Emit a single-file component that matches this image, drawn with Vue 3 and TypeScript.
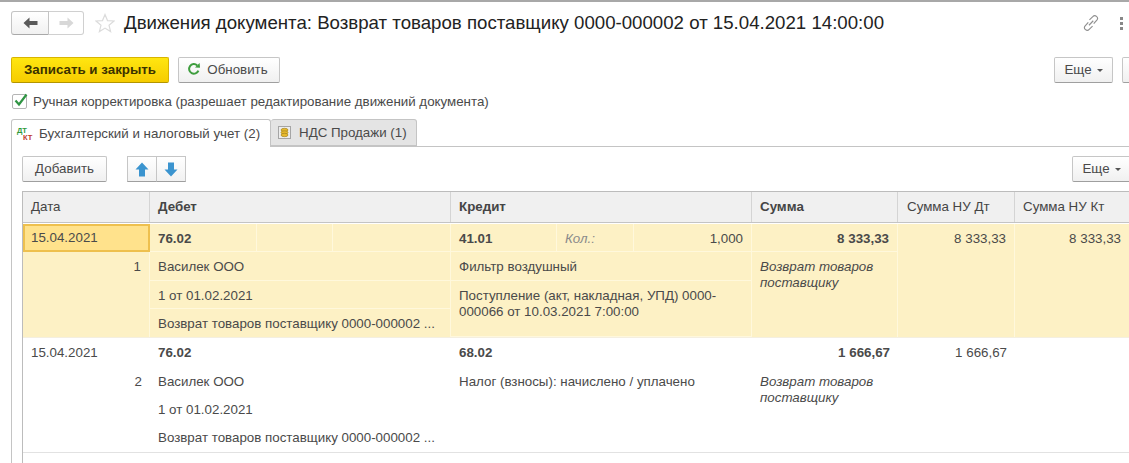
<script setup lang="ts">
interface Cell { text: string; cls: string }
const rows: { active: boolean; cells: Cell[] }[] = [
  {
    active: true,
    cells: [
      { text: '15.04.2021', cls: 'date focus r1' },
      { text: '76.02', cls: 'd1 b r1' },
      { text: '', cls: 'd2 r1' },
      { text: '', cls: 'd3 r1' },
      { text: '41.01', cls: 'c1 b r1' },
      { text: 'Кол.:', cls: 'c2 i muted r1' },
      { text: '1,000', cls: 'c3 num r1' },
      { text: '8 333,33', cls: 'sum b num r1' },
      { text: '8 333,33', cls: 'nd num span4' },
      { text: '8 333,33', cls: 'nk num span4' },
      { text: '1', cls: 'date num rest' },
      { text: 'Василек ООО', cls: 'dw r2' },
      { text: 'Фильтр воздушный', cls: 'cw r2' },
      { text: 'Возврат товаров поставщику', cls: 'sum i wrap rest' },
      { text: '1 от 01.02.2021', cls: 'dw r3' },
      { text: 'Поступление (акт, накладная, УПД) 0000-000066 от 10.03.2021 7:00:00', cls: 'cw wrap r34' },
      { text: 'Возврат товаров поставщику 0000-000002 ...', cls: 'dw r4 nol' },
    ],
  },
  {
    active: false,
    cells: [
      { text: '15.04.2021', cls: 'date r1' },
      { text: '76.02', cls: 'd1 b r1' },
      { text: '', cls: 'd2 r1' },
      { text: '', cls: 'd3 r1' },
      { text: '68.02', cls: 'cw b r1' },
      { text: '1 666,67', cls: 'sum b num r1' },
      { text: '1 666,67', cls: 'nd num span4' },
      { text: '', cls: 'nk num span4' },
      { text: '2', cls: 'date num rest' },
      { text: 'Василек ООО', cls: 'dw r2' },
      { text: 'Налог (взносы): начислено / уплачено', cls: 'cw r2' },
      { text: 'Возврат товаров поставщику', cls: 'sum i wrap rest' },
      { text: '1 от 01.02.2021', cls: 'dw r3' },
      { text: '', cls: 'cw r34' },
      { text: 'Возврат товаров поставщику 0000-000002 ...', cls: 'dw r4 nol' },
    ],
  },
]
</script>

<template>
  <div class="page">
    <div class="titlebar">
      <div class="nav">
        <button class="nav-btn back" aria-label="Назад">
          <svg width="15" height="12" viewBox="0 0 15 12"><path d="M0.5 6 L6.5 0.5 V4 H14.5 V8 H6.5 V11.5 Z" fill="#5a5a5a" /></svg>
        </button>
        <button class="nav-btn fwd" aria-label="Вперед">
          <svg width="15" height="12" viewBox="0 0 15 12"><path d="M14.5 6 L8.5 0.5 V4 H0.5 V8 H8.5 V11.5 Z" fill="#d8d8d8" /></svg>
        </button>
      </div>
      <svg class="star" width="20" height="20" viewBox="0 0 20 20"><path d="M10 1.5 L12.5 7.6 L19 8 L14 12.2 L15.6 18.6 L10 15.1 L4.4 18.6 L6 12.2 L1 8 L7.5 7.6 Z" fill="none" stroke="#dcdcdc" stroke-width="1.2" /></svg>
      <h1 class="title">Движения документа: Возврат товаров поставщику 0000-000002 от 15.04.2021 14:00:00</h1>
      <svg class="link" width="18" height="18" viewBox="0 0 16 16" fill="none" stroke="#8f8f8f" stroke-width="1"><path d="M6.6 5.2 L9.6 2.4 a2.3 2.3 0 0 1 3.6 3 L10.4 8.6" /><path d="M9.4 10.8 L6.4 13.6 a2.3 2.3 0 0 1 -3.6 -3 L5.6 7.4" /><path d="M6.2 10 L10 6" /></svg>
      <div class="dots"><i></i><i></i><i></i></div>
    </div>

    <div class="toolbar">
      <button class="btn primary">Записать и закрыть</button>
      <button class="btn refresh">
        <svg width="14" height="14" viewBox="0 0 14 14" fill="none"><path d="M11.4 8.6 A4.8 4.8 0 1 1 10.2 3.4" stroke="#3f9e3f" stroke-width="2" /><path d="M8 5.6 L13 5.8 L12.6 1 Z" fill="#3f9e3f" /></svg>
        Обновить
      </button>
      <button class="btn more push">Еще<span class="caret"></span></button>
      <button class="btn stub"></button>
    </div>

    <label class="check">
      <span class="box">
        <svg width="16" height="16" viewBox="0 0 16 16"><path d="M3.5 7.5 L7 11.5 L14.5 1.5" fill="none" stroke="#2f9443" stroke-width="2.2" /></svg>
      </span>
      Ручная корректировка (разрешает редактирование движений документа)
    </label>

    <div class="tabs">
      <div class="tab on">
        <span class="dtkt"><span class="dt">ДТ</span><span class="kt">КТ</span></span>
        Бухгалтерский и налоговый учет (2)
      </div>
      <div class="tab off">
        <svg width="13" height="13" viewBox="0 0 13 13"><rect x="0.5" y="0.5" width="12" height="12" fill="#ededed" stroke="#a5a5a5" /><ellipse cx="6.5" cy="4" rx="3.5" ry="1.7" fill="#e8b92c" stroke="#a4851f" stroke-width="0.7" /><ellipse cx="6.5" cy="6.5" rx="3.5" ry="1.7" fill="#e8b92c" stroke="#a4851f" stroke-width="0.7" /><ellipse cx="6.5" cy="9" rx="3.5" ry="1.7" fill="#e8b92c" stroke="#a4851f" stroke-width="0.7" /></svg>
        НДС Продажи (1)
      </div>
    </div>

    <div class="panel">
      <div class="panel-tools">
        <button class="btn add">Добавить</button>
        <div class="updown">
          <button class="seg" aria-label="Вверх"><svg width="14" height="15" viewBox="0 0 14 15"><path d="M7 0.5 L13.5 7.5 H10 V14.5 H4 V7.5 H0.5 Z" fill="#3b94cf" /></svg></button>
          <button class="seg" aria-label="Вниз"><svg width="14" height="15" viewBox="0 0 14 15"><path d="M7 14.5 L13.5 7.5 H10 V0.5 H4 V7.5 H0.5 Z" fill="#3b94cf" /></svg></button>
        </div>
        <button class="btn more push">Еще<span class="caret"></span></button>
      </div>

      <div class="table">
        <div class="head">
          <div class="hc date">Дата</div>
          <div class="hc debit b">Дебет</div>
          <div class="hc credit b">Кредит</div>
          <div class="hc sum b">Сумма</div>
          <div class="hc nd">Сумма НУ Дт</div>
          <div class="hc nk">Сумма НУ Кт</div>
        </div>
        <div v-for="(row, ri) in rows" :key="ri" class="row" :class="{ active: row.active }">
          <div v-for="(c, ci) in row.cells" :key="ci" class="cell" :class="c.cls"><span>{{ c.text }}</span></div>
        </div>
      </div>
    </div>
  </div>
</template>

<style>
html, body { margin: 0; overflow: hidden; background: #fff; }
</style>

<style scoped>
.page {
  width: 1129px;
  height: 463px;
  overflow: hidden;
  box-sizing: border-box;
  border-top: 2px solid #a8a8a8;
  font-family: "Liberation Sans", Arial, sans-serif;
  font-size: 13.33px;
  color: #4a4a4a;
  background: #fff;
}
button { font-family: inherit; color: inherit; margin: 0; padding: 0; }
.titlebar { display: flex; align-items: center; height: 24px; margin: 9px 0 0 11px; }
.nav { display: flex; width: 73px; height: 24px; box-sizing: border-box; }
.nav-btn { height: 24px; border: 1px solid #d0d0d0; display: flex; align-items: center; justify-content: center; box-sizing: border-box; }
.back { width: 38px; border-radius: 3px 0 0 3px; border-color: #c4c4c4; border-bottom-color: #a9a9a9; background: linear-gradient(#fff, #f1f1f1); }
.fwd { width: 35px; border-left: 0; border-radius: 0 3px 3px 0; background: #fff; }
.star { margin-left: 11px; }
.title { margin: 0 0 0 9px; font-size: 18.67px; font-weight: 400; color: #222; white-space: nowrap; line-height: 24px; }
.link { margin-left: auto; }
.dots { display: flex; flex-direction: column; gap: 2px; margin: 0 6px 0 20px; }
.dots i { width: 3px; height: 3px; background: #888; display: block; }

.toolbar { display: flex; margin: 22px -23px 0 11px; }
.btn {
  height: 26px;
  box-sizing: border-box;
  padding-bottom: 2px;
  border: 1px solid #c6c6c6;
  border-bottom-color: #9f9f9f;
  border-radius: 2px;
  background: linear-gradient(#fff, #f0f0f0);
  font-size: 13.33px;
  display: flex;
  align-items: center;
  justify-content: center;
}
.primary { width: 158px; background: linear-gradient(#ffe610, #f6cc00); border-color: #d8b400; border-bottom-color: #b39500; color: #3b3200; font-weight: 700; }
.refresh { width: 102px; margin-left: 9px; gap: 6px; padding-right: 3px; }
.more { width: 59px; gap: 5px; }
.push { margin-left: auto; }
.stub { width: 30px; margin-left: 9px; }
.caret { width: 0; height: 0; border: 3px solid transparent; border-top: 3px solid #555; border-bottom: 0; margin-top: 2px; }

.check { display: flex; align-items: center; height: 19px; margin: 9px 0 0 12px; gap: 6px; }
.box { width: 15px; height: 15px; box-sizing: border-box; border: 1px solid #b5b5b5; border-radius: 2px; background: #fff; display: block; line-height: 0; }
.box svg { margin: -2px 0 0 -1px; }

.tabs { display: flex; margin: 8px 0 0 11px; height: 28px; position: relative; z-index: 1; }
.tab { box-sizing: border-box; display: flex; align-items: center; border: 1px solid #c4c4c4; border-radius: 3px 3px 0 0; }
.tab.on { width: 260px; height: 28px; background: #fff; border-bottom: 0; padding-left: 5px; gap: 4px; }
.tab.off { width: 146px; height: 27px; background: #e4e4e4; border-left: 0; padding-left: 7px; gap: 8px; }
.dtkt { position: relative; width: 18px; height: 16px; display: block; font-size: 7.5px; line-height: 8px; font-weight: 700; }
.dt { position: absolute; left: 0; top: 1px; color: #2f9a3c; }
.kt { position: absolute; left: 6px; top: 8px; color: #c0392b; }

.panel { margin: -1px 0 0 11px; width: 1200px; height: 320px; box-sizing: border-box; border: 1px solid #c4c4c4; border-width: 1px 0 0 1px; padding: 9px 0 0 10px; }
.panel-tools { display: flex; width: 1109px; }
.add { width: 85px; }
.updown { display: flex; margin-left: 20px; }
.seg { width: 30px; height: 26px; box-sizing: border-box; border: 1px solid #c6c6c6; border-bottom-color: #9f9f9f; background: linear-gradient(#fff, #f1f1f1); display: flex; align-items: center; justify-content: center; }
.seg + .seg { margin-left: -1px; }

.table { margin-top: 9px; width: 1108px; height: 300px; box-sizing: border-box; border-left: 1px solid #bcbcbc; border-top: 1px solid #bcbcbc; }
.head, .row {
  display: grid;
  grid-template-columns: 127px 107px 76px 118px 106px 77px 118px 146px 117px 1fr;
}
.head { height: 31px; box-sizing: border-box; background: #f0f0f0; border-bottom: 1px solid #c4c4c4; margin-bottom: 1px; }
.hc { border-right: 1px solid #d4d4d4; padding-left: 8px; line-height: 29px; color: #454545; }
.hc.date { grid-column: 1; }
.hc.debit { grid-column: 2 / 5; }
.hc.credit { grid-column: 5 / 8; }
.hc.sum { grid-column: 8; }
.hc.nd { grid-column: 9; padding-left: 9px; }
.hc.nk { grid-column: 10; }
.b { font-weight: 700; }

.row { grid-template-rows: repeat(4, 28.35px); border-bottom: 1px solid #e2e2e2; }
.row.active { background: #fdf1c5; border-bottom-color: #f4efe0; }
.cell { padding: 1px 8px 0; line-height: 28px; box-sizing: border-box; min-width: 0; white-space: nowrap; }
.row.active .cell { border-right: 1px solid #fff8dc; border-bottom: 1px solid #fff8dc; }
.row.active .cell.nol { border-bottom: 0; }
.row.active .cell.span4, .row.active .cell.rest { border-bottom: 0; }
.date { grid-column: 1; }
.d1 { grid-column: 2; }
.d2 { grid-column: 3; }
.d3 { grid-column: 4; }
.c1 { grid-column: 5; }
.c2 { grid-column: 6; }
.c3 { grid-column: 7; }
.dw { grid-column: 2 / 5; }
.cw { grid-column: 5 / 8; }
.sum { grid-column: 8; }
.nd { grid-column: 9; }
.nk { grid-column: 10; padding-right: 8px; }
.r1 { grid-row: 1; }
.r2 { grid-row: 2; }
.r3 { grid-row: 3; }
.r4 { grid-row: 4; }
.r34 { grid-row: 3 / 5; }
.rest { grid-row: 2 / 5; }
.span4 { grid-row: 1 / 5; }
.num { text-align: right; }
.i { font-style: italic; }
.muted { color: #8a8a8a; }
.wrap { white-space: normal; line-height: 16px; padding-top: 7px; }
.sum.wrap { padding-top: 7px; }
.row.active .focus { background: #ffe28c; border: 2px solid #eec04e; line-height: 24px; padding-left: 6px; padding-top: 0; }
</style>
